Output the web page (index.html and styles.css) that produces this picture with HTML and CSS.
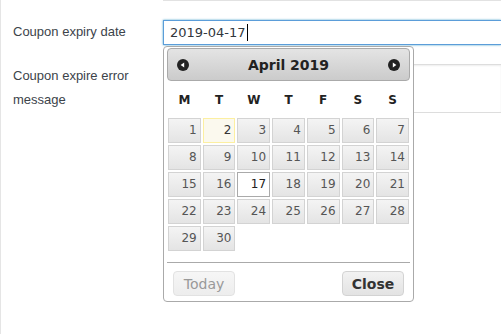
FILE: index.html
```html
<!DOCTYPE html>
<html lang="en">
<head>
    <meta charset="UTF-8">
    <meta name="viewport" content="width=device-width, initial-scale=1.0">
    <title>Coupon settings</title>
    <link rel="stylesheet" href="styles.css">
</head>
<body>
    <div class="form-wrap">
        <div class="prev-field"></div>

        <div class="form-row">
            <label class="field-label" for="expiry">Coupon expiry date</label>
            <div class="field">
                <div class="date-input" id="expiry">2019-04-17<span class="caret"></span></div>
            </div>
        </div>

        <div class="form-row">
            <label class="field-label">Coupon expire error message</label>
            <div class="field">
                <div class="textarea"></div>
            </div>
        </div>

        <!-- Datepicker popup -->
        <div class="datepicker">
            <div class="dp-header">
                <svg class="dp-arrow" width="12" height="12" viewBox="0 0 12 12">
                    <circle cx="6" cy="6" r="6" fill="#222"/>
                    <polygon points="3.6,6 7.2,3.4 7.2,8.6" fill="#fff"/>
                </svg>
                <span class="dp-title">April 2019</span>
                <svg class="dp-arrow" width="12" height="12" viewBox="0 0 12 12">
                    <circle cx="6" cy="6" r="6" fill="#222"/>
                    <polygon points="8.4,6 4.8,3.4 4.8,8.6" fill="#fff"/>
                </svg>
            </div>

            <div class="dp-weekdays">
                <span>M</span><span>T</span><span>W</span><span>T</span><span>F</span><span>S</span><span>S</span>
            </div>

            <div class="dp-days">
                <a class="day">1</a>
                <a class="day today">2</a>
                <a class="day">3</a>
                <a class="day">4</a>
                <a class="day">5</a>
                <a class="day">6</a>
                <a class="day">7</a>
                <a class="day">8</a>
                <a class="day">9</a>
                <a class="day">10</a>
                <a class="day">11</a>
                <a class="day">12</a>
                <a class="day">13</a>
                <a class="day">14</a>
                <a class="day">15</a>
                <a class="day">16</a>
                <a class="day active">17</a>
                <a class="day">18</a>
                <a class="day">19</a>
                <a class="day">20</a>
                <a class="day">21</a>
                <a class="day">22</a>
                <a class="day">23</a>
                <a class="day">24</a>
                <a class="day">25</a>
                <a class="day">26</a>
                <a class="day">27</a>
                <a class="day">28</a>
                <a class="day">29</a>
                <a class="day">30</a>
            </div>

            <div class="dp-buttons">
                <button class="dp-btn disabled">Today</button>
                <button class="dp-btn primary">Close</button>
            </div>
        </div>
    </div>
</body>
</html>
```

FILE: styles.css
```css
/* Reset */
* {
    margin: 0;
    padding: 0;
    box-sizing: border-box;
}

body {
    font-family: 'Liberation Sans', Arial, sans-serif;
    background-color: #fff;
    color: #3c434a;
    overflow: hidden;
}

.form-wrap {
    position: relative;
    height: 334px;
    border-left: 1px solid #e5e5e5;
    padding-left: 12px;
}

.prev-field {
    margin-left: 150px;
    height: 1px;
    background: #e2e2e2;
}

/* Rows */
.form-row {
    display: flex;
    margin-top: 19px;
}

.field-label {
    width: 150px;
    flex-shrink: 0;
    font-size: 13px;
    line-height: 24px;
    padding-right: 16px;
}

.field {
    flex: 1;
    min-width: 0;
}

/* the fields run on past the right edge of the window */
.date-input {
    height: 25px;
    border: 1px solid #5b9dd9;
    border-right: none;
    box-shadow: 0 0 2px rgba(30, 140, 190, 0.8);
    font-family: 'DejaVu Sans', Verdana, sans-serif;
    font-size: 13px;
    line-height: 23px;
    padding-left: 6px;
    color: #32373c;
}

.caret {
    display: inline-block;
    width: 1px;
    height: 17px;
    background: #000;
    vertical-align: -4px;
    margin-left: 1px;
}

.textarea {
    height: 49px;
    border: 1px solid #ddd;
    border-right: none;
    box-shadow: inset 0 1px 2px rgba(0, 0, 0, 0.07);
}

/* Datepicker */
.datepicker {
    position: absolute;
    left: 162px;
    top: 46px;
    width: 251px;
    height: 256px;
    background: #fff;
    border: 1px solid #aaa;
    border-radius: 4px;
    padding: 1px 3px 0;
    font-family: 'DejaVu Sans', Verdana, sans-serif;
}

.dp-header {
    display: flex;
    align-items: center;
    justify-content: space-between;
    height: 33px;
    padding: 0 9px;
    border: 1px solid #aaa;
    border-radius: 4px;
    background: linear-gradient(#e4e4e4, #cbcbcb);
}

.dp-title {
    font-size: 14px;
    font-weight: bold;
    color: #222;
}

.dp-weekdays {
    display: grid;
    grid-template-columns: repeat(7, 1fr);
    column-gap: 2px;
    margin: 0 1px;
    height: 37px;
    align-items: center;
    text-align: center;
    font-size: 12px;
    font-weight: bold;
    color: #222;
}

.dp-days {
    display: grid;
    grid-template-columns: repeat(7, 1fr);
    grid-auto-rows: 25px;
    gap: 2px 2px;
    margin: 0 1px;
}

.day {
    display: block;
    border: 1px solid #d3d3d3;
    background: linear-gradient(#f4f4f4, #e4e4e4);
    color: #555;
    font-size: 12px;
    line-height: 23px;
    text-align: right;
    padding-right: 3px;
}

.day.today {
    border-color: #fcefa1;
    background: #fbf9ee;
    color: #363636;
}

.day.active {
    border-color: #aaa;
    background: #fff;
    color: #212121;
}

.dp-buttons {
    display: flex;
    justify-content: space-between;
    margin-top: 11px;
    border-top: 1px solid #aaa;
    padding: 8px 6px 0;
}

.dp-btn {
    width: 62px;
    height: 25px;
    border: 1px solid #d3d3d3;
    border-radius: 4px;
    background: linear-gradient(#f2f2f2, #e3e3e3);
    font-family: 'DejaVu Sans', Verdana, sans-serif;
    font-size: 14px;
    color: #555;
}

.dp-btn.disabled {
    color: #999;
    border-color: #e2e2e2;
    background: linear-gradient(#f6f6f6, #ededed);
}

.dp-btn.primary {
    font-weight: bold;
    color: #333;
}
```
